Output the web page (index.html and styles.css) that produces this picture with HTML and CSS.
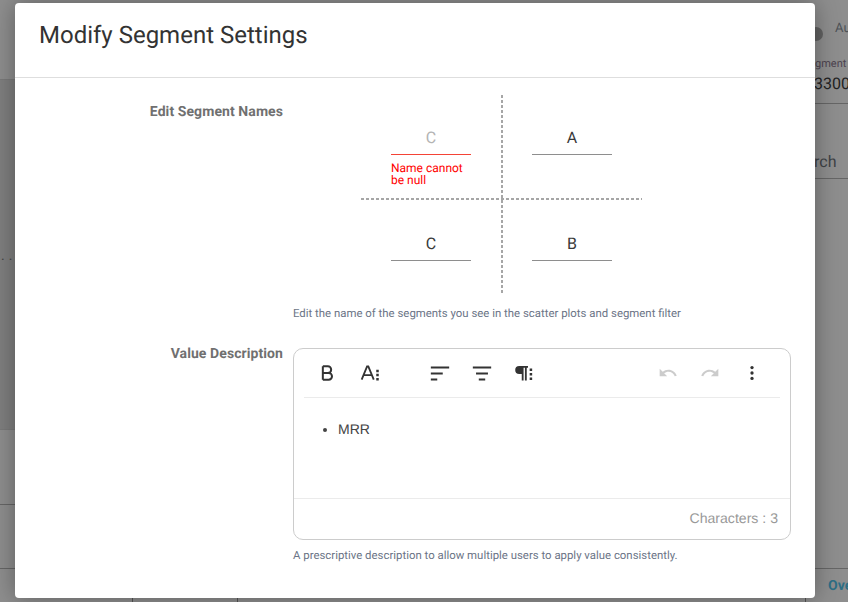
FILE: index.html
```html
<!DOCTYPE html>
<html lang="en">
<head>
<meta charset="utf-8">
<title>Modify Segment Settings</title>
<link rel="stylesheet" href="styles.css">
</head>
<body>
<div class="backdrop">
  <div class="bg-panel"></div>
  <div class="bg-rule bg-r1"></div>
  <div class="bg-rule bg-r2"></div>
  <div class="bg-rule bg-r3"></div>
  <div class="bg-rule bg-r4"></div>
  <div class="bg-rule bg-r5"></div>
  <div class="bg-rule bg-r6"></div>
  <div class="bg-rule bg-r7"></div>
  <div class="bg-tick bg-t1"></div>
  <div class="bg-tick bg-t2"></div>
  <div class="bg-tick bg-t3"></div>
  <div class="bg-dots">..</div>
  <div class="bg-toggle"></div>
  <div class="bg-auto">Au</div>
  <div class="bg-gment">gment</div>
  <div class="bg-num">3300</div>
  <div class="bg-rch">rch</div>
  <div class="bg-ove">Ove</div>
</div>
<main class="modal">
  <header class="modal-head"><h1>Modify Segment Settings</h1></header>
  <div class="modal-body">
    <div class="row row-names">
      <div class="label">Edit Segment Names</div>
      <div class="field">
        <div class="quad">
          <div class="axis-v"></div>
          <div class="axis-h"></div>
          <div class="cell">
            <div class="seg seg-error">C</div>
            <div class="seg-msg">Name cannot<br>be null</div>
          </div>
          <div class="cell"><div class="seg">A</div></div>
          <div class="cell cell-low"><div class="seg">C</div></div>
          <div class="cell cell-low"><div class="seg">B</div></div>
        </div>
        <p class="hint hint-names">Edit the name of the segments you see in the scatter plots and segment filter</p>
      </div>
    </div>
    <div class="row row-value">
      <div class="label">Value Description</div>
      <div class="field field-value">
        <div class="editor">
          <div class="toolbar">
            <svg class="ic ic-b" viewBox="0 0 24 24"><path d="M7 4v16M7 4h6a4 4 0 0 1 0 8H7M7 12h7a4 4 0 0 1 0 8H7" fill="none" stroke="#333" stroke-width="2.400"/></svg>
            <svg class="ic ic-a" viewBox="0 0 24 24"><path d="M2 20 8.500 4h1.500L16.500 20M4.500 14.500h9.500" fill="none" stroke="#333" stroke-width="2.200"/><path d="M19.500 8h3v3h-3zM19.500 13h3v3h-3zM19.500 18h3v3h-3z" fill="#333"/></svg>
            <svg class="ic ic-left" viewBox="0 0 24 24"><path d="M2 5h20v2.200H2zM2 11.500h13v2.200H2zM2 18h7v2.200H2z" fill="#333"/></svg>
            <svg class="ic ic-center" viewBox="0 0 24 24"><path d="M2 5h20v2.200H2zM5.500 11.500h13v2.200h-13zM8.500 18h7v2.200h-7z" fill="#333"/></svg>
            <svg class="ic ic-para" viewBox="0 0 24 24"><path d="M7.500 3.500H18v2.200h-1.500V21h-2.200V5.700h-1.600V21h-2.200v-7.800H7.500a4.850 4.850 0 0 1 0-9.700z" fill="#333"/><path d="M20 6.500h3v3h-3zM20 12h3v3h-3zM20 17.500h3v3h-3z" fill="#333"/></svg>
            <svg class="ic ic-undo" viewBox="0 0 24 24"><path d="M12.500 8c-2.700 0-5 1-6.800 2.600L2 7v9h9l-3.600-3.600c1.400-1.200 3.200-1.900 5.100-1.900 3.500 0 6.500 2.300 7.600 5.500l2.400-.8C21 11 17.100 8 12.500 8z" fill="#ccc"/></svg>
            <svg class="ic ic-redo" viewBox="0 0 24 24"><path d="M11.500 8c2.700 0 5 1 6.800 2.600L22 7v9h-9l3.600-3.600c-1.400-1.200-3.200-1.900-5.100-1.900-3.500 0-6.500 2.300-7.600 5.500l-2.400-.8C3 11 6.900 8 11.500 8z" fill="#ccc"/></svg>
            <svg class="ic ic-more" viewBox="0 0 24 24"><circle cx="12" cy="5.500" r="2" fill="#333"/><circle cx="12" cy="12" r="2" fill="#333"/><circle cx="12" cy="18.500" r="2" fill="#333"/></svg>
          </div>
          <div class="editor-text"><ul><li>MRR</li></ul></div>
          <div class="editor-foot">Characters : 3</div>
        </div>
        <p class="hint hint-value">A prescriptive description to allow multiple users to apply value consistently.</p>
      </div>
    </div>
  </div>
</main>
</body>
</html>
```
FILE: styles.css
```css
* { box-sizing: border-box; }
html, body { margin: 0; height: 100%; }
body {
  width: 848px;
  height: 602px;
  overflow: hidden;
  position: relative;
  background: #8e8e8e;
  font-family: Roboto, "Liberation Sans", sans-serif;
  text-rendering: geometricPrecision;
  display: flex;
  padding: 3px 33px 4px 15px;
}
.backdrop { position: absolute; inset: 0; color: #3c3c3c; }
.bg-panel { position: absolute; left: 0; top: 80px; width: 15px; height: 350px; background: #7f7f7f; }
.bg-rule { position: absolute; left: 0; right: 0; height: 1px; background: #6e6e6e; }
.bg-r1 { top: 79px; width: 15px; right: auto; background: #7a7a7a; }
.bg-r2 { top: 429px; width: 15px; right: auto; background: #7a7a7a; }
.bg-r3 { top: 504px; width: 15px; right: auto; background: #666; }
.bg-r4 { top: 568px; width: 15px; right: auto; background: #666; }
.bg-r5 { top: 103px; left: 815px; background: #666; }
.bg-r6 { top: 178px; left: 815px; background: #666; }
.bg-r7 { top: 568px; left: 815px; background: #666; }
.bg-tick { position: absolute; top: 598px; width: 1px; height: 4px; background: #555; }
.bg-t1 { left: 132px; }
.bg-t2 { left: 237px; }
.bg-t3 { left: 805px; }
.bg-dots { position: absolute; left: 1px; top: 248px; font-size: 14px; letter-spacing: 4px; line-height: 16px; color: #444; }
.bg-toggle { position: absolute; left: 809px; top: 27px; width: 14px; height: 14px; border-radius: 50%; background: #626262; }
.bg-auto { position: absolute; left: 835px; top: 20px; font-size: 13px; line-height: 18px; color: #4d5257; }
.bg-gment { position: absolute; left: 815px; top: 57px; font-size: 11px; line-height: 14px; color: #4d4450; }
.bg-num { position: absolute; left: 814px; top: 74px; font-size: 16px; line-height: 20px; color: #222; }
.bg-rch { position: absolute; left: 814px; top: 152px; font-size: 16px; line-height: 20px; color: #3e4347; }
.bg-ove { position: absolute; left: 828px; top: 577px; font-size: 14px; line-height: 18px; font-weight: 700; color: #2e6e85; }

.modal {
  position: relative;
  width: 800px;
  background: #fff;
  border-radius: 4px;
  color: #333;
  box-shadow: 0 0 24px rgba(0, 0, 0, 0.35);
}
.modal-head {
  height: 75px;
  padding: 18px 24px 0;
  border-bottom: 1px solid #dedede;
}
.modal-head h1 {
  margin: 0;
  font-size: 24px;
  line-height: 28px;
  font-weight: 400;
  color: #333;
}
.modal-body { padding-top: 17px; }
.row { display: flex; }
.label {
  width: 268px;
  text-align: right;
  font-size: 14px;
  line-height: 18px;
  font-weight: 700;
  letter-spacing: 0.08px;
  color: #707070;
}
.row-names .label { padding-top: 8px; }
.row-value { margin-top: 25px; }
.field { margin-left: 10px; width: 498px; }
.field-value { margin-top: 3px; }
.quad {
  position: relative;
  width: 349px;
  height: 198px;
  display: grid;
  grid-template-columns: 80px 80px;
  grid-template-rows: 105px 93px;
  column-gap: 61px;
  padding-left: 98px;
}
.axis-v {
  position: absolute;
  left: 208px;
  top: 0;
  bottom: 0;
  width: 2px;
  background: repeating-linear-gradient(to bottom, #a6a6a6 0 3px, transparent 3px 5px);
}
.axis-h {
  position: absolute;
  left: 68px;
  width: 281px;
  top: 103px;
  height: 2px;
  background: repeating-linear-gradient(to right, #a6a6a6 0 3px, transparent 3px 5px);
}
.cell { padding-top: 30px; }
.seg {
  height: 30px;
  border-bottom: 1px solid #8e8e8e;
  text-align: center;
  font-size: 16px;
  line-height: 26px;
  color: #3a3a3a;
}
.cell-low { padding-top: 31px; }
.cell-low .seg { height: 30px; }
.seg-error { border-bottom-color: #f44336; color: #b4b4b4; }
.seg-msg { margin-top: 7px; font-size: 12px; line-height: 12px; color: #f00; }
.hint { margin: 0; font-size: 11.4px; line-height: 14px; color: #6c7587; }
.hint-names { margin-top: 13px; }
.hint-value { margin-top: 8px; }
.editor {
  width: 498px;
  height: 192px;
  border: 1px solid #ccc;
  border-radius: 10px;
  display: flex;
  flex-direction: column;
}
.toolbar {
  height: 49px;
  margin: 0 10px;
  border-bottom: 1px solid #ebebeb;
  display: flex;
  align-items: center;
  flex: none;
  padding-left: 13px;
}
.ic { width: 20px; height: 20px; flex: none; }
.ic-a { margin-left: 23px; }
.ic-left { margin-left: 49px; width: 22px; height: 22px; }
.ic-center { margin-left: 20px; width: 22px; height: 22px; }
.ic-para { margin-left: 20px; }
.ic-undo { margin-left: 125px; }
.ic-redo { margin-left: 22px; }
.ic-more { margin-left: 22px; }
.editor-text {
  flex: 1;
  font-family: "Liberation Sans", Arial, sans-serif;
  font-size: 14px;
  line-height: 20px;
  color: #444;
  padding: 21px 0 0 44px;
}
.editor-text ul { margin: 0; padding: 0; }
.editor-foot {
  height: 41px;
  border-top: 1px solid #ebebeb;
  text-align: right;
  padding: 10px 12px 0 0;
  font-family: "Liberation Sans", Arial, sans-serif;
  font-size: 14.100px;
  line-height: 18px;
  color: #999;
}
```
